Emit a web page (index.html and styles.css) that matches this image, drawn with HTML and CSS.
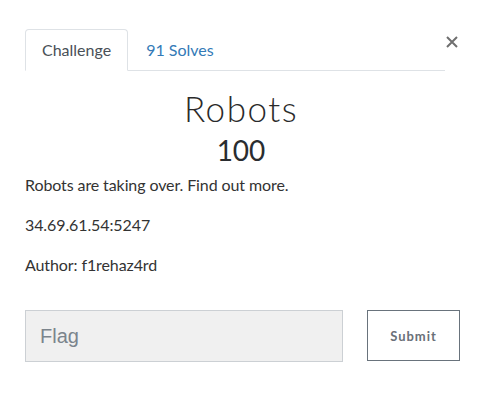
FILE: index.html
```html
<!DOCTYPE html>
<html>
<head>
<meta charset="utf-8">
<link rel="stylesheet" href="styles.css">
</head>
<body>
<div class="modal">
  <div class="header">
    <ul class="tabs">
      <li class="tab active">Challenge</li>
      <li class="tab link">91 Solves</li>
    </ul>
    <button class="close" aria-label="Close">
      <svg width="12" height="12" viewBox="0 0 12 12"><path d="M1 1L11 11M11 1L1 11" stroke="#6f6f6f" stroke-width="2" fill="none"/></svg>
    </button>
  </div>
  <h2 class="name">Robots</h2>
  <h3 class="value">100</h3>
  <p class="desc">Robots are taking over. Find out more.</p>
  <p class="desc">34.69.61.54:5247</p>
  <p class="desc">Author: f1rehaz4rd</p>
  <form class="submit-row">
    <input class="flag" type="text" placeholder="Flag">
    <button class="submit" type="button">Submit</button>
  </form>
</div>
</body>
</html>
```

FILE: styles.css
```css
* { box-sizing: border-box; }
html, body { margin: 0; padding: 0; background: #fff; }
body {
  font-family: Lato, "Noto Sans", sans-serif;
  font-size: 16px;
  line-height: 24px;
  color: #212529;
}
.modal {
  width: 481px;
  padding: 29px 0 0 25px;
}
.header {
  display: flex;
  align-items: flex-start;
}
.tabs {
  list-style: none;
  margin: 0;
  padding: 0;
  display: flex;
  width: 420px;
  border-bottom: 1px solid #dee2e6;
}
.tab {
  padding: 8px 16px;
  border: 1px solid transparent;
  border-top-left-radius: 4px;
  border-top-right-radius: 4px;
  margin-bottom: -1px;
  margin-right: 1px;
}
.tab.active {
  color: #495057;
  border-color: #dee2e6 #dee2e6 #fff;
  background: #fff;
}
.tab.link { color: #337ab7; }
.close {
  background: none;
  border: 0;
  padding: 0;
  margin: 7px 0 0 1px;
  width: 12px;
  height: 12px;
  display: flex;
}
.name {
  margin: 19px 0 0;
  width: 432px;
  text-align: center;
  font-weight: 300;
  font-size: 35px;
  line-height: 36px;
  letter-spacing: 1.5px;
  color: #2a2a2a;
}
.value {
  margin: 8px 0 0;
  width: 432px;
  text-align: center;
  font-weight: 400;
  font-size: 28px;
  line-height: 32px;
  color: #2a2d30;
}
.desc {
  margin: 7px 0 0;
  color: #333;
  letter-spacing: -0.1px;
}
.desc + .desc { margin-top: 16px; }
.submit-row {
  display: flex;
  margin-top: 33px;
  gap: 24px;
}
.flag {
  width: 318px;
  height: 52px;
  background: #f0f0f0;
  border: 1px solid #ccd0d4;
  padding: 0 14px;
  font-family: "Liberation Sans", Arial, sans-serif;
  font-size: 20px;
  color: #495057;
  outline: none;
}
.flag::placeholder { color: #7b848c; }
.submit {
  width: 93px;
  height: 51px;
  background: #fff;
  border: 1px solid #69737c;
  font-family: Lato, sans-serif;
  font-weight: 700;
  font-size: 13px;
  letter-spacing: 1px;
  color: #6a7078;
  padding: 0;
}
```
